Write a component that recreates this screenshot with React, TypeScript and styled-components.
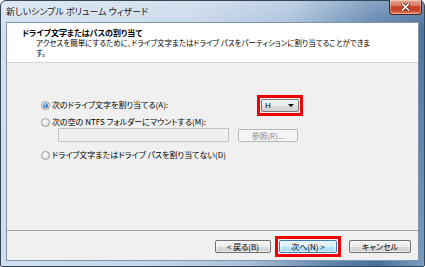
import React from "react";
import styled, { createGlobalStyle } from "styled-components";

const Global = createGlobalStyle`
  html, body { margin: 0; padding: 0; background: #ffffff; }
  body { font-family: "Noto Sans CJK JP", "Noto Sans", sans-serif; }
  * { box-sizing: border-box; }
`;

const Window = styled.div`
  width: 425px;
  height: 267px;
  display: flex;
  flex-direction: column;
  padding: 0 5px 5px 5px;
  border: 1px solid #35465a;
  border-radius: 6px 6px 2px 2px;
  background:
    linear-gradient(to bottom, rgba(255,255,255,0.25), rgba(255,255,255,0) 30px),
    linear-gradient(100deg, #d3e0ee 0%, #c8d8ea 40%, #a9c1dc 62%, #5f84ad 80%, #4a719c 90%, #7b9ec4 100%);
  font-feature-settings: "palt" 1;
`;

const TitleBar = styled.div`
  height: 21px;
  display: flex;
  align-items: flex-start;
  justify-content: space-between;
  flex: none;
`;

const TitleText = styled.div`
  font-size: 9px;
  line-height: 21px;
  color: #1a1a1a;
  white-space: nowrap;
  text-shadow: 0 0 6px rgba(255,255,255,0.9);
`;

const CloseButton = styled.div`
  width: 33px;
  height: 15px;
  margin-top: -1px;
  margin-right: -3px;
  border: 1px solid #4d2218;
  border-top: none;
  border-radius: 0 0 4px 4px;
  background: linear-gradient(to bottom, #e9a999 0%, #d9735c 40%, #c23f21 50%, #c8472a 75%, #e2886a 100%);
  display: flex;
  align-items: center;
  justify-content: center;
  box-shadow: inset 0 0 0 1px rgba(255,255,255,0.35);
`;

const Client = styled.div`
  flex: 1;
  display: flex;
  flex-direction: column;
  border: 1px solid #7f96ae;
  background: #f0f0f0;
`;

const Header = styled.div`
  height: 40px;
  flex: none;
  background: #ffffff;
  border-bottom: 1px solid #d6d6d6;
  padding: 4px 0 0 15px;
`;

const HeaderTitle = styled.div`
  font-size: 8px;
  font-weight: bold;
  line-height: 11px;
  color: #000;
  white-space: nowrap;
`;

const HeaderDesc = styled.div`
  font-size: 7.5px;
  line-height: 10px;
  color: #000;
  padding-left: 14px;
  white-space: nowrap;
`;

const Body = styled.div`
  flex: 1;
  padding: 36px 119px 0 34px;
  display: flex;
  flex-direction: column;
`;

const OptionRow = styled.div<{ $gap?: number }>`
  display: flex;
  align-items: center;
  height: 12px;
  margin-top: ${(p) => p.$gap ?? 0}px;
`;

const Radio = styled.span<{ $checked?: boolean }>`
  width: 9px;
  height: 9px;
  flex: none;
  border-radius: 50%;
  border: 1px solid #9a9a9a;
  background: radial-gradient(circle at 40% 35%, #ffffff 0%, #e6e6e6 60%, #d0d0d0 100%);
  display: flex;
  align-items: center;
  justify-content: center;
  margin-right: 2px;
  &::after {
    content: "";
    display: ${(p) => (p.$checked ? "block" : "none")};
    width: 5px;
    height: 5px;
    border-radius: 50%;
    background: radial-gradient(circle at 40% 35%, #9fd0f5 0%, #2f7fcf 55%, #1a4f9a 100%);
  }
`;

const Label = styled.span<{ $disabled?: boolean }>`
  font-size: 8px;
  line-height: 12px;
  color: ${(p) => (p.$disabled ? "#6d6d6d" : "#000")};
  white-space: nowrap;
`;

const Highlight = styled.div<{ $push?: boolean }>`
  border: 3px solid #ee0000;
  padding: 1px;
  margin: -4px;
  ${(p) => (p.$push ? "margin-left: auto;" : "")}
  flex: none;
  display: flex;
`;

const Combo = styled.div`
  width: 38px;
  height: 13px;
  border: 1px solid #7a7a7a;
  border-radius: 2px;
  background: linear-gradient(to bottom, #f4f4f4 0%, #ebebeb 50%, #dcdcdc 51%, #d2d2d2 100%);
  display: flex;
  align-items: center;
  justify-content: space-between;
  padding: 0 4px 0 3px;
  font-size: 8px;
  font-family: "Liberation Sans", sans-serif;
  color: #000;
`;

const Arrow = styled.span`
  width: 0;
  height: 0;
  border-left: 3px solid transparent;
  border-right: 3px solid transparent;
  border-top: 3px solid #000;
`;

const FieldRow = styled.div`
  display: flex;
  align-items: center;
  gap: 9px;
  margin-left: 17px;
  margin-right: 1px;
  height: 14px;
`;

const TextField = styled.div`
  flex: 1;
  height: 14px;
  border: 1px solid #c3c3c3;
  background: #f0f0f0;
`;

const PushButton = styled.div<{ $width: number; $variant?: "normal" | "default" | "disabled" }>`
  width: ${(p) => p.$width}px;
  height: 13px;
  flex: none;
  border-radius: 2px;
  display: flex;
  align-items: center;
  justify-content: center;
  font-size: 8px;
  white-space: nowrap;
  border: 1px solid
    ${(p) => (p.$variant === "default" ? "#3c7fb1" : p.$variant === "disabled" ? "#b5b5b5" : "#707070")};
  color: ${(p) => (p.$variant === "disabled" ? "#8a8a8a" : "#000")};
  background: ${(p) =>
    p.$variant === "default"
      ? "linear-gradient(to bottom, #eaf6fd 0%, #d9f0fc 50%, #bee6fd 51%, #a7d9f5 100%)"
      : p.$variant === "disabled"
      ? "#f4f4f4"
      : "linear-gradient(to bottom, #f2f2f2 0%, #ebebeb 50%, #dddddd 51%, #cfcfcf 100%)"};
  box-shadow: inset 0 0 0 1px rgba(255,255,255,0.6);
`;

const Footer = styled.div`
  height: 30px;
  flex: none;
  border-top: 1px solid #a0a0a0;
  display: flex;
  align-items: center;
  justify-content: flex-end;
  padding: 1px 7px 0 0;
`;

const FooterGap = styled.div<{ $w: number }>`
  width: ${(p) => p.$w}px;
  flex: none;
`;

export default function App() {
  return (
    <>
      <Global />
      <Window>
        <TitleBar>
          <TitleText>新しいシンプル ボリューム ウィザード</TitleText>
          <CloseButton>
            <svg width="9" height="8" viewBox="0 0 9 8">
              <path d="M1.5 1 L7.5 7 M7.5 1 L1.5 7" stroke="#5a2010" strokeWidth="3" strokeLinecap="square" />
              <path d="M1.5 1 L7.5 7 M7.5 1 L1.5 7" stroke="#ffffff" strokeWidth="1.6" strokeLinecap="square" />
            </svg>
          </CloseButton>
        </TitleBar>
        <Client>
          <Header>
            <HeaderTitle>ドライブ文字またはパスの割り当て</HeaderTitle>
            <HeaderDesc>
              アクセスを簡単にするために、ドライブ文字またはドライブ パスをパーティションに割り当てることができま
              <br />
              す。
            </HeaderDesc>
          </Header>
          <Body>
            <OptionRow>
              <Radio $checked />
              <Label>次のドライブ文字を割り当てる(A):</Label>
              <Highlight $push>
                <Combo>
                  <span>H</span>
                  <Arrow />
                </Combo>
              </Highlight>
            </OptionRow>
            <OptionRow $gap={5}>
              <Radio />
              <Label>次の空の NTFS フォルダーにマウントする(M):</Label>
            </OptionRow>
            <FieldRow>
              <TextField />
              <PushButton $width={60} $variant="disabled">参照(R)...</PushButton>
            </FieldRow>
            <OptionRow $gap={7}>
              <Radio />
              <Label>ドライブ文字またはドライブ パスを割り当てない(D)</Label>
            </OptionRow>
          </Body>
          <Footer>
            <PushButton $width={56}>&lt; 戻る(B)</PushButton>
            <FooterGap $w={8} />
            <Highlight>
              <PushButton $width={58} $variant="default">次へ(N) &gt;</PushButton>
            </Highlight>
            <FooterGap $w={12} />
            <PushButton $width={62}>キャンセル</PushButton>
          </Footer>
        </Client>
      </Window>
    </>
  );
}
